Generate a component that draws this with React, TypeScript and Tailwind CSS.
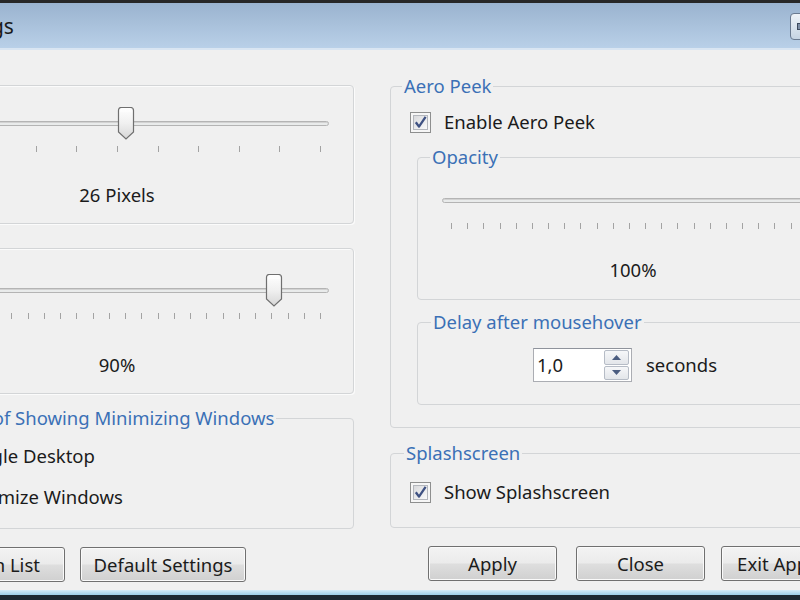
import React from "react";

const FONT = { fontFamily: '"Noto Sans", "Open Sans", Arial, sans-serif' };

function Thumb() {
  return (
    <svg width="18" height="33" viewBox="0 0 18 33">
      <defs>
        <linearGradient id="tg" x1="0" y1="0" x2="0" y2="1">
          <stop offset="0" stopColor="#ffffff" />
          <stop offset="0.5" stopColor="#f0f0f0" />
          <stop offset="1" stopColor="#d6d6d6" />
        </linearGradient>
      </defs>
      <path
        d="M1.5 3.5 Q1.5 0.5 4.5 0.5 H13.5 Q16.5 0.5 16.5 3.5 V25 L9 32 L1.5 25 Z"
        fill="url(#tg)"
        stroke="#6f6f6f"
        strokeWidth="1.2"
      />
      <path d="M3 4 H15" stroke="#ffffff" strokeWidth="1" />
    </svg>
  );
}

function Slider({
  width,
  thumbLeft,
  ticks,
}: {
  width: number;
  thumbLeft: number | null;
  ticks: number;
}) {
  const start = 9;
  const end = width - 9;
  const xs: number[] = [];
  for (let i = 0; i <= ticks; i++) xs.push(start + ((end - start) * i) / ticks);
  return (
    <div className="flex flex-col" style={{ width }}>
      <div className="relative h-[33px]">
        <div className="absolute left-0 right-0 top-[14px] h-[5px] rounded-[3px] border border-[#b4b4b4] bg-[#e9ebeb] shadow-[inset_0_1px_0_#d2d2d2]" />
        {thumbLeft !== null && (
          <div className="absolute top-0" style={{ left: thumbLeft }}>
            <Thumb />
          </div>
        )}
      </div>
      <svg width={width} height="6" className="mt-[6px]">
        {xs.map((x, i) => (
          <line
            key={i}
            x1={Math.round(x) + 0.5}
            x2={Math.round(x) + 0.5}
            y1="0"
            y2="6"
            stroke="#a3a3a3"
            strokeWidth="1"
          />
        ))}
      </svg>
    </div>
  );
}

function Checkbox() {
  return (
    <svg width="21" height="21" viewBox="0 0 21 21" className="shrink-0">
      <defs>
        <linearGradient id="cg" x1="0" y1="0" x2="1" y2="1">
          <stop offset="0" stopColor="#d8d9dc" />
          <stop offset="1" stopColor="#fbfbfb" />
        </linearGradient>
      </defs>
      <rect x="0.5" y="0.5" width="20" height="20" fill="#f6f6f6" stroke="#8e8f8f" />
      <rect x="3.5" y="3.5" width="14" height="14" fill="url(#cg)" stroke="#b4b7bd" />
      <path
        d="M5.8 10.2 L9 14.6 L15.6 4.8"
        fill="none"
        stroke="#3f5283"
        strokeWidth="2.3"
        strokeLinejoin="round"
      />
    </svg>
  );
}

function Radio() {
  return (
    <svg width="17" height="17" viewBox="0 0 17 17" className="shrink-0">
      <circle cx="8.5" cy="8.5" r="7.5" fill="#f4f4f4" stroke="#8e8f8f" />
    </svg>
  );
}

function Button({ children, w }: { children: React.ReactNode; w: string }) {
  return (
    <div
      className={`${w} h-[35px] shrink-0 rounded-[3px] border border-[#707070] bg-[linear-gradient(to_bottom,#f3f3f3_0%,#ebebeb_48%,#dedede_52%,#d0d0d0_100%)] shadow-[inset_0_0_0_1px_#fafafa] flex items-center justify-center text-[18.5px] leading-[26px] text-[#1b1b1b] whitespace-nowrap`}
    >
      {children}
    </div>
  );
}

export default function App() {
  return (
    <div
      className="w-[800px] h-[600px] overflow-hidden flex flex-col bg-[#f0f0f0] text-[#1b1b1b]"
      style={FONT}
    >
      <div className="h-[3px] shrink-0 bg-[#272727]" />
      <div className="h-[45px] shrink-0 flex items-center justify-between bg-[linear-gradient(to_bottom,#9ab3cf,#b9d0e8)]">
        <span className="ml-[-66px] text-[21px] leading-[28px] text-[#1a1a1a] whitespace-nowrap">
          Settings
        </span>
        <div className="mr-[-22px] mt-[1px] w-[32px] h-[27px] rounded-[4px] border border-[#6a7a90] bg-[linear-gradient(to_bottom,#eef3f8,#c6d4e3)] flex items-center pl-[6px]">
          <div className="w-[8px] h-[7px] border border-[#3c4a5e] bg-[#7d8ea5]" />
        </div>
      </div>
      <div className="h-[2px] shrink-0 bg-[#d9e5f2]" />

      <div className="flex-1 flex items-start">
        {/* Left column */}
        <div className="ml-[-120px] w-[474px] shrink-0 flex flex-col pt-[35px]">
          <div className="h-[139px] rounded-[4px] border border-[#d3d5d7] shadow-[inset_1px_1px_0_#fbfbfb,1px_1px_0_#fbfbfb] px-[24px] pt-[21px] flex flex-col">
            <Slider width={424} thumbLeft={212} ticks={10} />
            <div className="mt-[30px] text-center text-[18.5px] leading-[26px] w-[424px]">26 Pixels</div>
          </div>

          <div className="mt-[24px] h-[146px] rounded-[4px] border border-[#d3d5d7] shadow-[inset_1px_1px_0_#fbfbfb,1px_1px_0_#fbfbfb] px-[24px] pt-[25px] flex flex-col">
            <Slider width={424} thumbLeft={360} ticks={25} />
            <div className="mt-[33px] text-center text-[18.5px] leading-[26px] w-[424px]">90%</div>
          </div>

          <fieldset className="mt-[11px] h-[124px] rounded-[4px] border border-[#d3d5d7] min-w-0">
            <legend className="ml-[37px] px-[2px] text-[18.5px] leading-[26px] text-[#3b70b6] whitespace-nowrap">
              Method of Showing Minimizing Windows
            </legend>
            <div className="flex flex-col pl-[54px]">
              <div className="mt-[12px] h-[26px] flex items-center gap-[8px] whitespace-nowrap text-[18.5px]">
                <Radio />
                <span>Toggle Desktop</span>
              </div>
              <div className="mt-[15px] h-[26px] flex items-center gap-[8px] whitespace-nowrap text-[18.5px]">
                <Radio />
                <span>Minimize Windows</span>
              </div>
            </div>
          </fieldset>

          <div className="mt-[18px] flex gap-[15px] pl-[19px]">
            <Button w="w-[166px]">Exclusion List</Button>
            <Button w="w-[166px]">Default Settings</Button>
          </div>
        </div>

        {/* Right column */}
        <div className="ml-[36px] w-[486px] shrink-0 flex flex-col pt-[23px]">
          <fieldset className="h-[355px] rounded-[4px] border border-[#d3d5d7] min-w-0">
            <legend className="ml-[11px] px-[2px] text-[18.5px] leading-[26px] text-[#3b70b6]">
              Aero Peek
            </legend>
            <div className="flex flex-col pl-[19px]">
              <div className="mt-[10px] h-[26px] flex items-center gap-[13px] text-[18.5px] whitespace-nowrap">
                <Checkbox />
                <span>Enable Aero Peek</span>
              </div>

              <fieldset className="ml-[7px] mt-[9px] w-[432px] h-[156px] rounded-[4px] border border-[#d3d5d7] min-w-0">
                <legend className="ml-[12px] px-[2px] text-[18.5px] leading-[26px] text-[#3b70b6]">
                  Opacity
                </legend>
                <div className="flex flex-col pl-[24px] pt-[14px]">
                  <Slider width={390} thumbLeft={372} ticks={23} />
                  <div className="mt-[28px] text-center text-[18.5px] leading-[26px] w-[382px]">100%</div>
                </div>
              </fieldset>

              <fieldset className="ml-[7px] mt-[9px] w-[432px] h-[96px] rounded-[4px] border border-[#d3d5d7] min-w-0">
                <legend className="ml-[13px] px-[2px] text-[18.5px] leading-[26px] text-[#3b70b6] whitespace-nowrap">
                  Delay after mousehover
                </legend>
                <div className="flex items-center pl-[115px] mt-[13px]">
                  <div className="w-[99px] h-[34px] border border-[#abadb3] border-t-[#8f939c] bg-white flex items-center justify-between pl-[3px] pr-[2px]">
                    <span className="text-[18.5px] leading-[26px]">1,0</span>
                    <div className="w-[25px] h-[30px] flex flex-col gap-[1px]">
                      <div className="flex-1 rounded-[2px] border border-[#b6bcc6] bg-[linear-gradient(to_bottom,#f6f7f9,#e3e6ea)] flex items-center justify-center">
                        <svg width="9" height="5" viewBox="0 0 9 5">
                          <path d="M0 5 L4.5 0 L9 5 Z" fill="#4b5d80" />
                        </svg>
                      </div>
                      <div className="flex-1 rounded-[2px] border border-[#b6bcc6] bg-[linear-gradient(to_bottom,#f6f7f9,#e3e6ea)] flex items-center justify-center">
                        <svg width="9" height="5" viewBox="0 0 9 5">
                          <path d="M0 0 L9 0 L4.5 5 Z" fill="#4b5d80" />
                        </svg>
                      </div>
                    </div>
                  </div>
                  <span className="ml-[14px] text-[18.5px] leading-[26px]">seconds</span>
                </div>
              </fieldset>
            </div>
          </fieldset>

          <fieldset className="mt-[12px] h-[88px] rounded-[4px] border border-[#d3d5d7] min-w-0">
            <legend className="ml-[13px] px-[2px] text-[18.5px] leading-[26px] text-[#3b70b6]">
              Splashscreen
            </legend>
            <div className="mt-[13px] pl-[19px] h-[26px] flex items-center gap-[13px] text-[18.5px] whitespace-nowrap">
              <Checkbox />
              <span>Show Splashscreen</span>
            </div>
          </fieldset>

          <div className="mt-[18px] flex pl-[38px]">
            <Button w="w-[129px]">Apply</Button>
            <div className="ml-[19px]">
              <Button w="w-[129px]">Close</Button>
            </div>
            <div className="ml-[16px]">
              <Button w="w-[166px]">Exit Application</Button>
            </div>
          </div>
        </div>
      </div>

      <div className="h-[5px] shrink-0 bg-[linear-gradient(to_bottom,#d7eefa,#9ccfe9)]" />
      <div className="h-[5px] shrink-0 bg-[#1d2a33]" />
    </div>
  );
}
